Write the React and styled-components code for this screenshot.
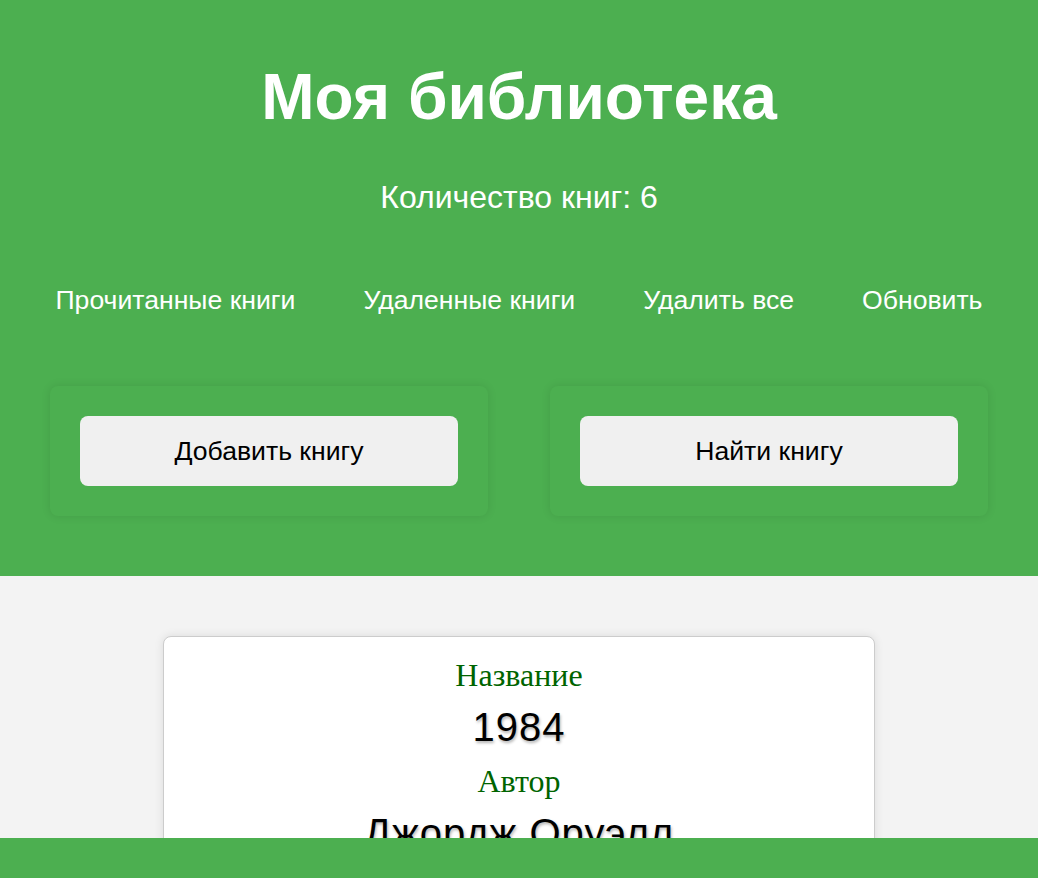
import React from "react";
import styled, { createGlobalStyle } from "styled-components";

const GlobalStyle = createGlobalStyle`
  body {
    margin: 0;
    background: #f3f3f3;
    font-family: "Liberation Sans", Arial, sans-serif;
  }
`;

const Header = styled.header`
  background: #4caf50;
  color: #fff;
  padding: 60px 50px 60px;
  text-align: center;
`;

const Title = styled.h1`
  font-size: 64px;
  font-weight: 700;
  margin: 0 0 45px;
`;

const Count = styled.p`
  font-size: 32px;
  margin: 0 0 69px;
`;

const Nav = styled.nav`
  display: flex;
  justify-content: center;
  gap: 68px;
  margin-bottom: 70px;
`;

const NavLink = styled.a`
  color: #fff;
  font-size: 26.6px;
  text-decoration: none;
  cursor: pointer;
`;

const Actions = styled.div`
  display: grid;
  grid-template-columns: 1fr 1fr;
  gap: 62px;
`;

const ActionCard = styled.div`
  background: #4caf50;
  border-radius: 8px;
  padding: 30px;
  box-shadow: 0 0 10px rgba(0, 0, 0, 0.1);
`;

const ActionButton = styled.button`
  width: 100%;
  height: 70px;
  border: none;
  border-radius: 8px;
  background: #f0f0f0;
  color: #000;
  font-family: "Liberation Sans", Arial, sans-serif;
  font-size: 26.6px;
  cursor: pointer;
`;

const Main = styled.main`
  display: flex;
  justify-content: center;
  padding: 60px 20px 80px;
`;

const BookCard = styled.div`
  width: 712px;
  background: #fff;
  border: 1px solid #ccc;
  border-radius: 8px;
  box-shadow: 0 0 10px rgba(0, 0, 0, 0.1);
  padding: 20px;
  box-sizing: border-box;
  text-align: center;
`;

const Label = styled.div`
  font-family: "Liberation Serif", "Times New Roman", serif;
  font-size: 32px;
  color: #006400;
`;

const Value = styled.div`
  font-size: 40px;
  letter-spacing: 1px;
  color: #000;
  text-shadow: 1px 2px 3px rgba(0, 0, 0, 0.3);
  margin: 11px 0 13px;
`;

const Footer = styled.footer`
  position: fixed;
  left: 0;
  right: 0;
  bottom: 0;
  height: 40px;
  background: #4caf50;
`;

const books = [
  { title: "1984", author: "Джордж Оруэлл" },
];

export default function App() {
  return (
    <>
      <GlobalStyle />
      <Header>
        <Title>Моя библиотека</Title>
        <Count>Количество книг: 6</Count>
        <Nav>
          <NavLink>Прочитанные книги</NavLink>
          <NavLink>Удаленные книги</NavLink>
          <NavLink>Удалить все</NavLink>
          <NavLink>Обновить</NavLink>
        </Nav>
        <Actions>
          <ActionCard>
            <ActionButton>Добавить книгу</ActionButton>
          </ActionCard>
          <ActionCard>
            <ActionButton>Найти книгу</ActionButton>
          </ActionCard>
        </Actions>
      </Header>
      <Main>
        {books.map((b) => (
          <BookCard key={b.title}>
            <Label>Название</Label>
            <Value>{b.title}</Value>
            <Label>Автор</Label>
            <Value>{b.author}</Value>
          </BookCard>
        ))}
      </Main>
      <Footer />
    </>
  );
}
